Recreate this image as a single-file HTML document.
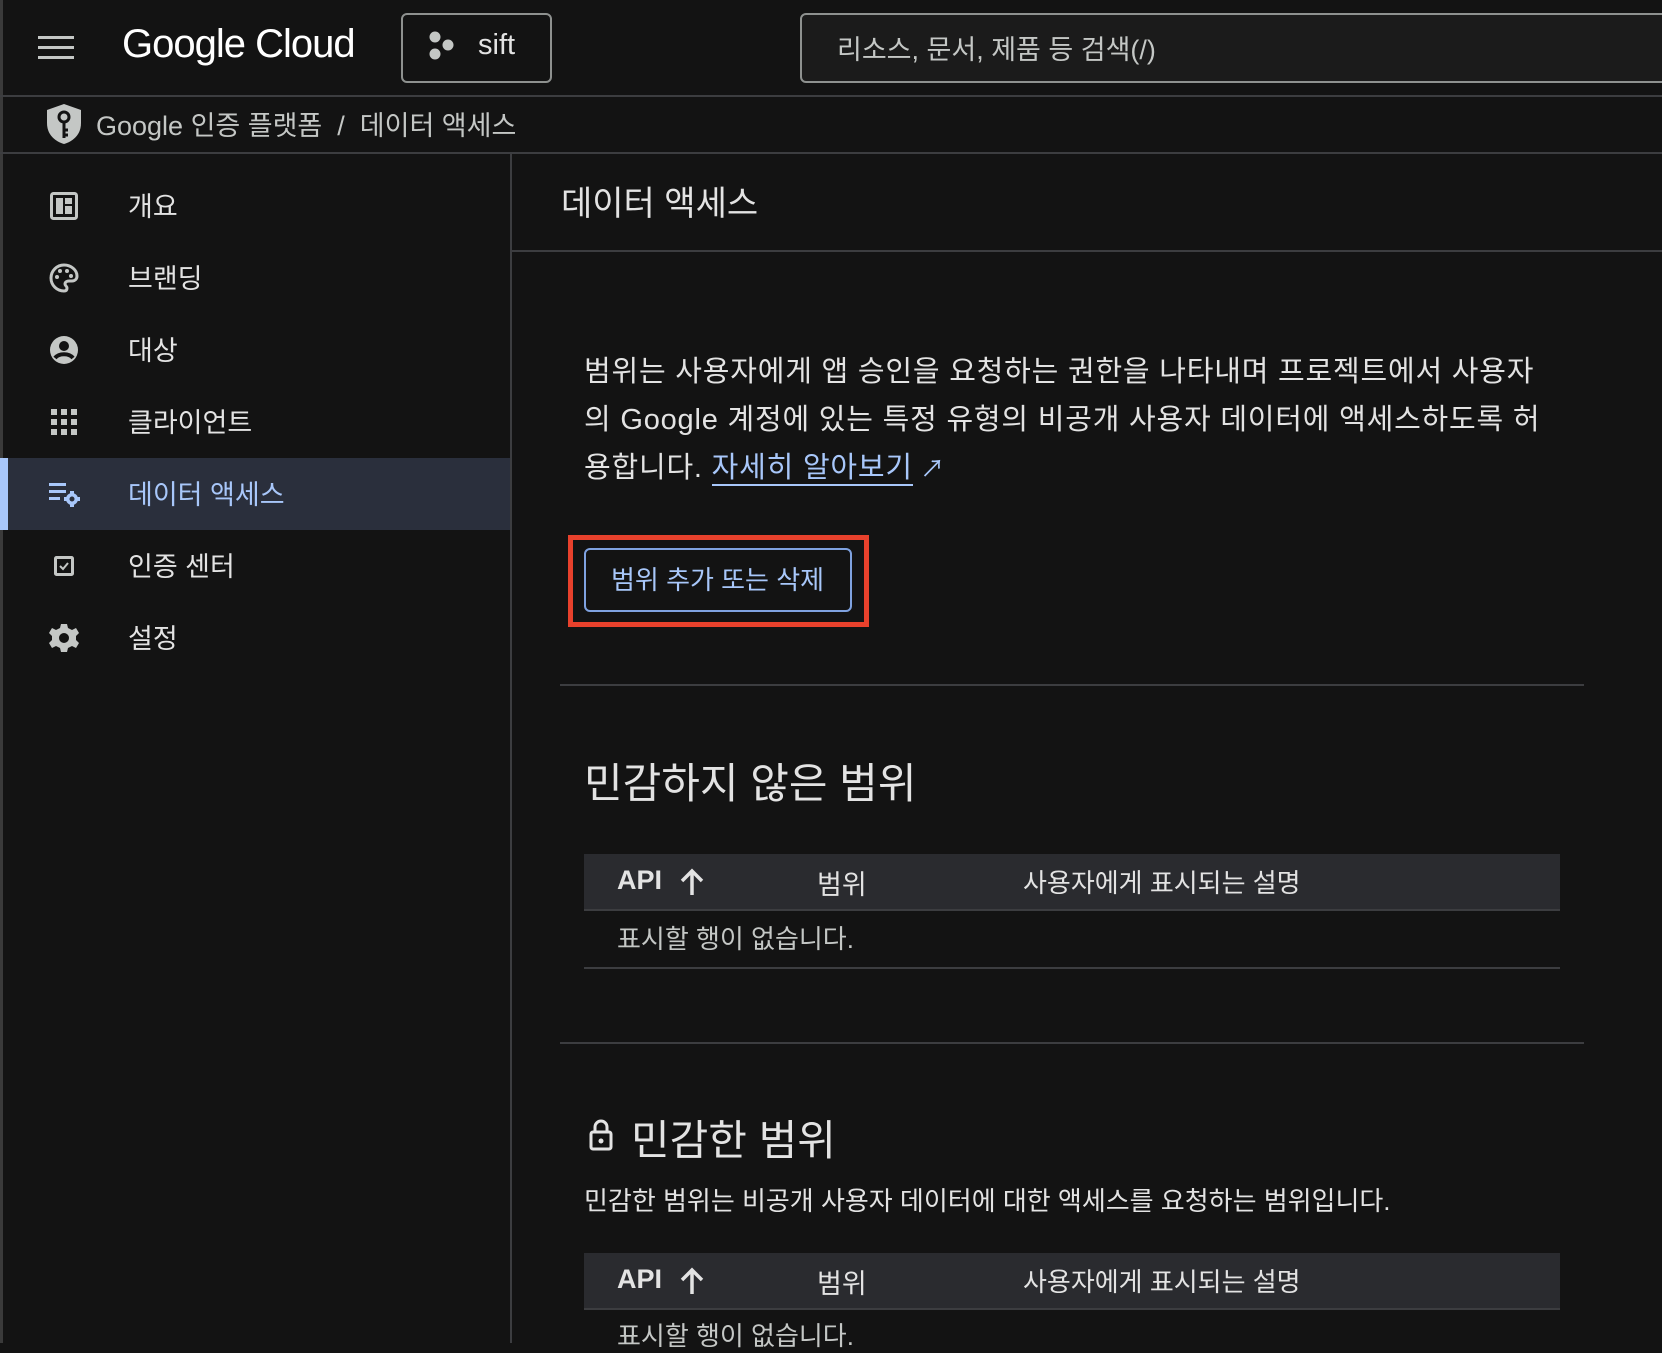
<!DOCTYPE html>
<html><head><meta charset="utf-8"><style>
*{box-sizing:border-box;margin:0;padding:0}
body{width:1662px;height:1343px;background:#131313;color:#e3e3e3;font-family:"Liberation Sans","Noto Sans CJK KR",sans-serif;overflow:hidden;position:relative}
.a{position:absolute;white-space:nowrap}
.hl{position:absolute;background:#3c3d40;height:2px}
.ic{position:absolute;fill:#c4c7c5}
</style></head><body>
<div class="a" style="left:0;top:0;width:3px;height:1343px;background:#3a3a3a"></div>
<div class="a" style="left:38px;top:36px;width:36px;height:3px;background:#c4c7c5;box-shadow:0 10px 0 #c4c7c5,0 20px 0 #c4c7c5"></div>
<div class="a" style="left:122px;top:22px;font-size:40px;color:#fff;letter-spacing:-1px">Google Cloud</div>
<div class="a" style="left:401px;top:13px;width:151px;height:70px;border:2px solid #8e918f;border-radius:6px"></div>
<svg class="ic" style="left:428px;top:31px" width="30" height="30" viewBox="0 0 30 30"><circle cx="7" cy="6" r="5.5" fill="#c4c7c5"/><circle cx="20" cy="14" r="5.5" fill="#c4c7c5"/><circle cx="7" cy="23" r="5.5" fill="#c4c7c5"/></svg>
<div class="a" style="left:478px;top:29px;font-size:29px;color:#e3e3e3">sift</div>
<div class="a" style="left:800px;top:13px;width:880px;height:70px;border:2px solid #8e918f;border-radius:6px;background:#1b1b1b"></div>
<div class="a" style="left:837px;top:28px;font-size:27px;color:#c4c7c5">리소스, 문서, 제품 등 검색(/)</div>
<div class="hl" style="left:0;top:95px;width:1662px"></div>
<svg class="a" style="left:44px;top:102px" width="40" height="44" viewBox="0 0 40 44"><path d="M20 2L37 8v13c0 11-7 18-17 21C10 39 3 32 3 21V8z" fill="#c4c7c5"/><circle cx="20" cy="15" r="5" fill="none" stroke="#131313" stroke-width="3"/><path d="M20 20v16M20 28h4M20 33h4" stroke="#131313" stroke-width="3"/></svg>
<div class="a" style="left:96px;top:104px;font-size:27px;color:#c4c7c5">Google 인증 플랫폼 &nbsp;/&nbsp; 데이터 액세스</div>
<div class="hl" style="left:0;top:152px;width:1662px"></div>
<div class="a" style="left:510px;top:153px;width:2px;height:1190px;background:#3c3d40"></div>
<div class="a" style="left:0;top:458px;width:510px;height:72px;background:#2a2f3c"></div>
<div class="a" style="left:0;top:458px;width:8px;height:72px;background:#a8c7fa"></div>
<svg class="ic" style="left:50px;top:192px" width="28" height="28" viewBox="0 0 28 28"><rect x="1.5" y="1.5" width="25" height="25" rx="2" fill="none" stroke="#c4c7c5" stroke-width="3"/><rect x="6" y="6" width="7" height="16"/><rect x="15" y="6" width="7" height="6"/><rect x="15" y="14" width="7" height="8"/></svg>
<div class="a" style="left:128px;top:185px;font-size:27px">개요</div>
<svg class="ic" style="left:49px;top:263px" width="30" height="30" viewBox="0 0 30 30"><path d="M15 2A13 13 0 0 0 15 28c2 0 3-1 3-3 0-2-2-2-2-4s2-3 4-3h3c3 0 5-2 5-5C28 7 22 2 15 2z" fill="none" stroke="#c4c7c5" stroke-width="3"/><circle cx="8" cy="14" r="2"/><circle cx="11" cy="8" r="2"/><circle cx="18" cy="8" r="2"/><circle cx="22" cy="13" r="2"/></svg>
<div class="a" style="left:128px;top:257px;font-size:27px">브랜딩</div>
<svg class="ic" style="left:49px;top:335px" width="30" height="30" viewBox="0 0 30 30"><circle cx="15" cy="15" r="14"/><circle cx="15" cy="11" r="5" fill="#131313"/><path d="M6 23c4-5 14-5 18 0" fill="none" stroke="#131313" stroke-width="4"/></svg>
<div class="a" style="left:128px;top:329px;font-size:27px">대상</div>
<svg class="ic" style="left:51px;top:409px" width="26" height="26" viewBox="0 0 26 26"><g><rect x="0" y="0" width="6" height="6"/><rect x="10" y="0" width="6" height="6"/><rect x="20" y="0" width="6" height="6"/><rect x="0" y="10" width="6" height="6"/><rect x="10" y="10" width="6" height="6"/><rect x="20" y="10" width="6" height="6"/><rect x="0" y="20" width="6" height="6"/><rect x="10" y="20" width="6" height="6"/><rect x="20" y="20" width="6" height="6"/></g></svg>
<div class="a" style="left:128px;top:401px;font-size:27px">클라이언트</div>
<svg class="a" style="left:49px;top:481px" width="32" height="26" viewBox="0 0 32 26" fill="#a8c7fa"><rect x="0" y="2" width="17" height="3"/><rect x="0" y="9" width="17" height="3"/><rect x="0" y="16" width="11" height="3"/><circle cx="23" cy="18" r="6"/><circle cx="23" cy="18" r="2.5" fill="#2a2f3c"/><path d="M21 10h4v3h-4zM21 23h4v3h-4zM15 16h3v4h-3zM28 16h3v4h-3z"/></svg>
<div class="a" style="left:128px;top:473px;font-size:27px;color:#a8c7fa">데이터 액세스</div>
<svg class="ic" style="left:54px;top:556px" width="20" height="20" viewBox="0 0 20 20"><rect x="1.5" y="1.5" width="17" height="17" rx="1" fill="none" stroke="#c4c7c5" stroke-width="3"/><path d="M6 10l3 3 5-6" fill="none" stroke="#c4c7c5" stroke-width="2"/></svg>
<div class="a" style="left:128px;top:545px;font-size:27px">인증 센터</div>
<svg class="ic" style="left:49px;top:623px" width="30" height="30" viewBox="0 0 30 30"><path d="M12 1h6l1 4 4 2 4-2 3 5-3 3v4l3 3-3 5-4-2-4 2-1 4h-6l-1-4-4-2-4 2-3-5 3-3v-4L0 10l3-5 4 2 4-2z"/><circle cx="15" cy="15" r="5" fill="#131313"/></svg>
<div class="a" style="left:128px;top:617px;font-size:27px">설정</div>
<div class="a" style="left:561px;top:176px;font-size:34px;color:#e3e3e3">데이터 액세스</div>
<div class="hl" style="left:512px;top:250px;width:1150px"></div>
<div class="a" style="left:584px;top:348px;font-size:29px;line-height:48px;letter-spacing:0.8px">범위는 사용자에게 앱 승인을 요청하는 권한을 나타내며 프로젝트에서 사용자<br>의 Google 계정에 있는 특정 유형의 비공개 사용자 데이터에 액세스하도록 허<br>용합니다. <span style="color:#a8c7fa;border-bottom:2px solid #a8c7fa">자세히 알아보기</span><span style="color:#a8c7fa;font-size:24px"> ↗</span></div>
<div class="a" style="left:568px;top:535px;width:301px;height:92px;border:5px solid #e8412c"></div>
<div class="a" style="left:584px;top:548px;width:268px;height:64px;border:2px solid #7fa2e0;border-radius:6px"></div>
<div class="a" style="left:611px;top:560px;font-size:26px;color:#a8c7fa">범위 추가 또는 삭제</div>
<div class="hl" style="left:560px;top:684px;width:1024px"></div>
<div class="a" style="left:584px;top:750px;font-size:42px">민감하지 않은 범위</div>
<div class="a" style="left:584px;top:854px;width:976px;height:57px;background:#2a2b2f;border-bottom:2px solid #3c3d40"></div>
<div class="a" style="left:617px;top:865px;font-size:27px;font-weight:bold">API</div>
<svg class="a" style="left:680px;top:868px" width="24" height="28" viewBox="0 0 24 28"><path d="M12 27V3M2 13L12 3l10 10" fill="none" stroke="#e3e3e3" stroke-width="3.5"/></svg>
<div class="a" style="left:817px;top:863px;font-size:27px">범위</div>
<div class="a" style="left:1023px;top:863px;font-size:26px">사용자에게 표시되는 설명</div>
<div class="a" style="left:617px;top:919px;font-size:26px;color:#c4c7c5">표시할 행이 없습니다.</div>
<div class="hl" style="left:584px;top:967px;width:976px"></div>
<div class="hl" style="left:560px;top:1042px;width:1024px"></div>
<svg class="a" style="left:589px;top:1119px" width="24" height="32" viewBox="0 0 24 32"><path d="M6 13V8a6 6 0 0 1 12 0v5" fill="none" stroke="#e3e3e3" stroke-width="3"/><rect x="2" y="13" width="20" height="17" rx="2" fill="none" stroke="#e3e3e3" stroke-width="3"/><circle cx="12" cy="22" r="2.5" fill="#e3e3e3"/></svg>
<div class="a" style="left:631px;top:1107px;font-size:42px">민감한 범위</div>
<div class="a" style="left:584px;top:1181px;font-size:26px">민감한 범위는 비공개 사용자 데이터에 대한 액세스를 요청하는 범위입니다.</div>
<div class="a" style="left:584px;top:1253px;width:976px;height:57px;background:#2a2b2f;border-bottom:2px solid #3c3d40"></div>
<div class="a" style="left:617px;top:1264px;font-size:27px;font-weight:bold">API</div>
<svg class="a" style="left:680px;top:1267px" width="24" height="28" viewBox="0 0 24 28"><path d="M12 27V3M2 13L12 3l10 10" fill="none" stroke="#e3e3e3" stroke-width="3.5"/></svg>
<div class="a" style="left:817px;top:1262px;font-size:27px">범위</div>
<div class="a" style="left:1023px;top:1262px;font-size:26px">사용자에게 표시되는 설명</div>
<div class="a" style="left:617px;top:1316px;font-size:26px;color:#c4c7c5">표시할 행이 없습니다.</div>
</body></html>
